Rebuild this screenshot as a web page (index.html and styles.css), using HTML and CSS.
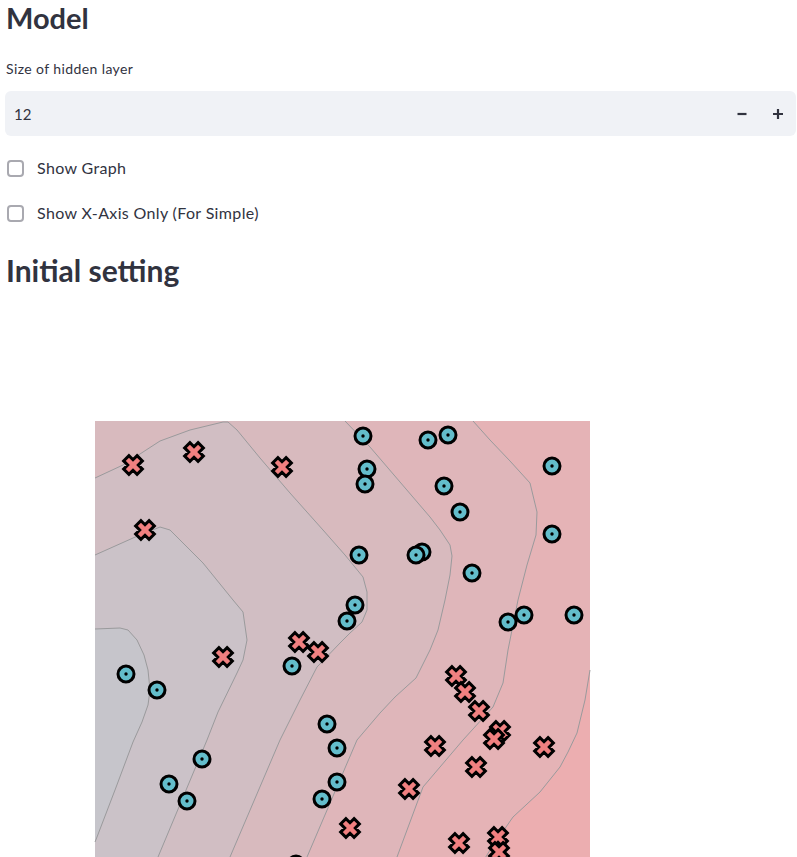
FILE: index.html
```html
<!DOCTYPE html>
<html>
<head>
<meta charset="utf-8">
<link rel="stylesheet" href="styles.css">
</head>
<body>
<main class="page">
  <h2 class="heading heading-model">Model</h2>
  <label class="widget-label">Size of hidden layer</label>
  <div class="number-input">
    <span class="number-value">12</span>
    <div class="stepper">
      <button class="step-btn" aria-label="decrement">
        <svg width="12" height="12" viewBox="0 0 12 12"><path d="M1.5 6H10.5" stroke="#31333F" stroke-width="2.2"/></svg>
      </button>
      <button class="step-btn" aria-label="increment">
        <svg width="12" height="12" viewBox="0 0 12 12"><path d="M1 6H11M6 1V11" stroke="#31333F" stroke-width="2.2"/></svg>
      </button>
    </div>
  </div>
  <label class="check-row check-first"><span class="check-box"></span><span class="check-text">Show Graph</span></label>
  <label class="check-row check-second"><span class="check-box"></span><span class="check-text">Show X-Axis Only (For Simple)</span></label>
  <h2 class="heading heading-initial">Initial setting</h2>
  <svg class="plot" width="600" height="620" viewBox="0 0 600 620">
    <defs>
      <path id="xm" d="M-3.75,-9.5 H3.75 V-3.75 H9.5 V3.75 H3.75 V9.5 H-3.75 V3.75 H-9.5 V-3.75 H-3.75 Z" transform="rotate(45)" fill="#F08080" stroke="#000" stroke-width="3" stroke-linejoin="miter"/>
      <g id="cm"><circle r="8" fill="#63BDCB" stroke="#000" stroke-width="3"/><circle r="1.7" fill="#000"/></g>
    </defs>
    <g transform="translate(-5,-300)">
      <rect x="95" y="421" width="495" height="495" fill="#ECAEB0"/>
      <path fill="#E5B3B6" d="M95,421 H590 V670 L585,700 L577,733 L568,752 L560,767 L540,792 L513,817 L490,850 L450,916 H95 Z"/>
      <path fill="#DFB6BA" d="M95,421 H473 L490,440 L510,461 L530,483 L537,512 L536,535 L527,565 L518,600 L512,630 L508,650 L503,683 L493,707 L463,740 L423,787 L397,857 L375,916 H95 Z"/>
      <path fill="#D8BABE" d="M95,421 H345 L370,447 L400,482 L430,517 L440,530 L450,545 L452,556 L450,575 L445,600 L438,630 L430,650 L416,678 L395,697 L380,713 L357,740 L307,857 L282,916 H95 Z"/>
      <path fill="#D1BEC3" d="M95,478 L123,465 L160,441 L190,430 L223,422 L228,422 L237,430 L260,458 L290,493 L323,530 L345,555 L363,577 L367,592 L367,610 L362,622 L350,633 L340,643 L317,667 L300,700 L280,740 L230,857 L205,916 H95 Z"/>
      <path fill="#CBC2C8" d="M95,555 L133,538 L160,527 L170,530 L203,563 L233,600 L243,612 L247,640 L243,660 L237,673 L218,712 L207,740 L158,857 L133,916 H95 Z"/>
      <path fill="#C6C5CB" d="M95,629 L120,628 L128,630 L137,640 L144,655 L148,670 L150,690 L148,705 L142,722 L133,742 L115,790 L97,837 L95,842 Z"/>
      <g fill="none" stroke="#9A9A9C" stroke-width="1" stroke-linejoin="round">
        <polyline points="590,670 585,700 577,733 568,752 560,767 540,792 513,817 490,850 450,916"/>
        <polyline points="473,421 490,440 510,461 530,483 537,512 536,535 527,565 518,600 512,630 508,650 503,683 493,707 463,740 423,787 397,857 375,916"/>
        <polyline points="345,421 370,447 400,482 430,517 440,530 450,545 452,556 450,575 445,600 438,630 430,650 416,678 395,697 380,713 357,740 307,857 282,916"/>
        <polyline points="95,478 123,465 160,441 190,430 223,422 228,422 237,430 260,458 290,493 323,530 345,555 363,577 367,592 367,610 362,622 350,633 340,643 317,667 300,700 280,740 230,857 205,916"/>
        <polyline points="95,555 133,538 160,527 170,530 203,563 233,600 243,612 247,640 243,660 237,673 218,712 207,740 158,857 133,916"/>
        <polyline points="95,629 120,628 128,630 137,640 144,655 148,670 150,690 148,705 142,722 133,742 115,790 97,837 95,842"/>
      </g>
      <g>
        <use href="#cm" x="363" y="436"/><use href="#cm" x="428" y="440"/><use href="#cm" x="448" y="435"/>
        <use href="#cm" x="552" y="466"/><use href="#cm" x="367" y="469"/><use href="#cm" x="365" y="484"/>
        <use href="#cm" x="444" y="486"/><use href="#cm" x="460" y="512"/><use href="#cm" x="552" y="534"/>
        <use href="#cm" x="359" y="555"/><use href="#cm" x="422" y="552"/><use href="#cm" x="416" y="555"/>
        <use href="#cm" x="472" y="573"/><use href="#cm" x="355" y="605"/><use href="#cm" x="347" y="621"/>
        <use href="#cm" x="524" y="615"/><use href="#cm" x="508" y="622"/><use href="#cm" x="574" y="615"/>
        <use href="#cm" x="292" y="666"/><use href="#cm" x="126" y="674"/><use href="#cm" x="157" y="690"/>
        <use href="#cm" x="327" y="724"/><use href="#cm" x="337" y="748"/><use href="#cm" x="202" y="759"/>
        <use href="#cm" x="169" y="784"/><use href="#cm" x="187" y="801"/><use href="#cm" x="337" y="782"/>
        <use href="#cm" x="322" y="799"/><use href="#cm" x="296" y="864"/>
      </g>
      <g>
        <use href="#xm" x="133" y="465"/><use href="#xm" x="194" y="452"/><use href="#xm" x="282" y="467"/>
        <use href="#xm" x="145" y="530"/><use href="#xm" x="223" y="657"/><use href="#xm" x="299" y="642"/>
        <use href="#xm" x="318" y="652"/><use href="#xm" x="456" y="676"/><use href="#xm" x="465" y="692"/>
        <use href="#xm" x="479" y="711"/><use href="#xm" x="500" y="731"/><use href="#xm" x="494" y="739"/>
        <use href="#xm" x="435" y="746"/><use href="#xm" x="544" y="747"/><use href="#xm" x="476" y="767"/>
        <use href="#xm" x="409" y="789"/><use href="#xm" x="350" y="828"/><use href="#xm" x="459" y="843"/>
        <use href="#xm" x="498" y="837"/><use href="#xm" x="499" y="852"/>
      </g>
    </g>
  </svg>
</main>
</body>
</html>
```
FILE: styles.css
```css
html, body {
  margin: 0;
  padding: 0;
  background: #ffffff;
}
body {
  font-family: "Lato", "Noto Sans", sans-serif;
  color: #31333F;
  width: 797px;
  overflow: hidden;
}
.page {
  display: flex;
  flex-direction: column;
  align-items: stretch;
  padding: 0 1px 0 5px;
}
.heading {
  margin: 0;
  font-weight: 700;
  color: #31333F;
  padding-left: 1px;
}
.heading-model {
  font-size: 29px;
  line-height: 35px;
}
.widget-label {
  display: block;
  margin-top: 24px;
  font-size: 14px;
  line-height: 20px;
  letter-spacing: 0.4px;
  padding-left: 1px;
}
.number-input {
  margin-top: 12px;
  height: 45px;
  background: #F0F2F6;
  border-radius: 6px;
  display: flex;
  align-items: center;
  justify-content: space-between;
  padding: 0 0 0 9px;
}
.number-value {
  font-size: 15px;
  color: #31333F;
}
.stepper {
  display: flex;
  align-items: center;
  height: 100%;
}
.step-btn {
  border: 0;
  background: transparent;
  width: 36px;
  height: 100%;
  padding: 0;
  display: flex;
  align-items: center;
  justify-content: center;
}
.step-btn svg {
  display: block;
}
.check-row {
  display: flex;
  align-items: center;
  height: 24px;
  gap: 13px;
  font-size: 16px;
  line-height: 24px;
  letter-spacing: 0.35px;
}
.check-first {
  margin-top: 20px;
}
.check-second {
  margin-top: 21px;
}
.check-box {
  box-sizing: border-box;
  width: 17px;
  height: 17px;
  margin-left: 2px;
  border: 2px solid #A9A9B0;
  border-radius: 4px;
  background: #ffffff;
  flex: none;
}
.heading-initial {
  margin-top: 30px;
  font-size: 30px;
  line-height: 31px;
}
.plot {
  display: block;
  margin-top: 14px;
}
```
